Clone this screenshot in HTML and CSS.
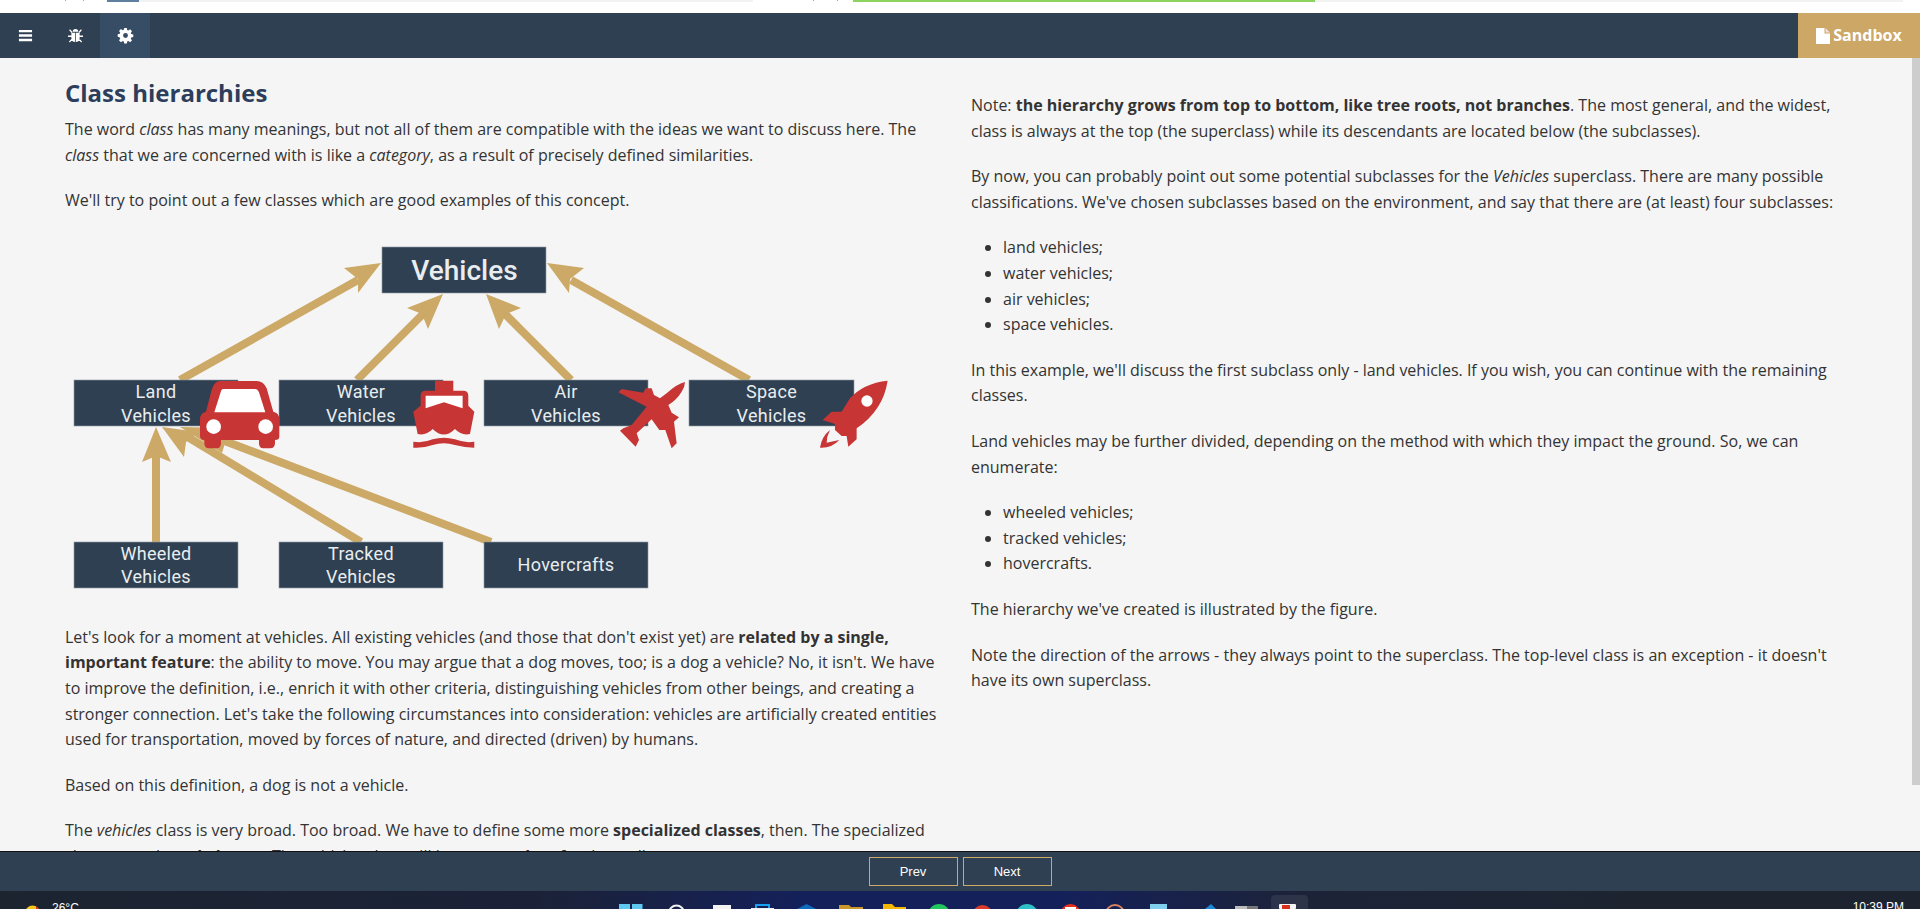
FILE: index.html
```html
<!DOCTYPE html>
<html lang="en">
<head>
  <meta charset="UTF-8">
  <title>Class hierarchies</title>
  <link rel="stylesheet" href="styles.css">
</head>
<body>
  <!-- top progress strip -->
  <div class="top-strip">
    <span class="gap-start"><i class="tick tick-a"></i><i class="tick tick-b"></i></span>
    <span class="seg-blue"></span>
    <span class="seg-light-a"></span>
    <span class="gap-mid"><i class="tick tick-c"></i><i class="tick tick-d"></i></span>
    <span class="seg-green"></span>
    <span class="seg-light-b"></span>
  </div>

  <div class="navbar">
    <a class="nav-btn">
      <svg class="nav-icon" viewBox="0 0 16 16"><path fill="#fff" d="M1 2h14v2.600H1zM1 6.700h14v2.600H1zM1 11.400h14V14H1z"/></svg>
    </a>
    <a class="nav-btn">
      <svg class="nav-icon" viewBox="0 0 16 16"><path fill="#fff" d="M5 4a3 3 0 0 1 6 0zM3.600 5h4v10c-2.400-.2-4-1.800-4-4.400zM8.400 5h4v5.600c0 2.600-1.600 4.200-4 4.400zM1.200 2.400l1-1 2.600 2.800-1 1zM14.800 2.400l-1-1-2.600 2.800 1 1zM0 8h3.600v1.500H0zM12.400 8H16v1.500h-3.600zM1 14.400l2.600-2.800 1 1L2 15.400zM15 14.400l-2.600-2.800-1 1 2.600 2.800z"/></svg>
    </a>
    <a class="nav-btn active">
      <svg class="nav-icon" viewBox="0 0 16 16"><path fill="#fff" fill-rule="evenodd" d="M6.600 0h2.800l.4 2.200 1.200.5 1.900-1.300 2 2-1.300 1.900.5 1.200 2.200.4v2.800l-2.200.4-.5 1.200 1.300 1.900-2 2-1.900-1.300-1.200.5-.4 2.200H6.600l-.4-2.200-1.200-.5-1.900 1.300-2-2 1.300-1.900-.5-1.200L-.3 9.400V6.600l2.200-.4.5-1.200-1.300-1.900 2-2 1.900 1.300 1.200-.5zM8 5.400a2.600 2.600 0 1 0 0 5.200 2.600 2.600 0 0 0 0-5.200z"/></svg>
    </a>
    <a class="sandbox">
      <svg class="file-icon" viewBox="0 0 14 16"><path fill="#fff" d="M0 0h8.500v5.500H14V16H0z"/><path fill="#f3dfe0" d="M9.500 0L14 4.500H9.500z"/></svg>
      Sandbox
    </a>
  </div>

  <div class="content">
    <div class="col col-left">
      <h2>Class hierarchies</h2>
      <p>The word <em>class</em> has many meanings, but not all of them are compatible with the ideas we want to discuss here. The <em>class</em> that we are concerned with is like a <em>category</em>, as a result of precisely defined similarities.</p>
      <p>We'll try to point out a few classes which are good examples of this concept.</p>

      <!-- figure: vehicles hierarchy, viewBox is in page pixels -->
      <svg class="figure" viewBox="65 234 842 371">
        <g class="shaft">
          <path d="M180 380L358 280"/>
          <path d="M357 380L424 313"/>
          <path d="M571 380L504 313"/>
          <path d="M749 380L571 280"/>
          <path d="M156 542V455"/>
          <path d="M361 542L186 436"/>
          <path d="M491 542L222 440"/>
        </g>
        <g class="head">
          <path d="M381 263L344 268L358 279L358 293z"/>
          <path d="M443 294L407 308L422 314L428 329z"/>
          <path d="M486 294L521 308L506 314L499 329z"/>
          <path d="M547 263L584 268L570 279L569 293z"/>
          <path d="M156 427L142 462L156 456L171 462z"/>
          <path d="M162 427L198 432L186 442L184 457z"/>
          <path d="M180 427L232 428L226 440L222 453z"/>
        </g>

        <g class="box"><rect x="382" y="247" width="164" height="46"/><text class="big" x="464.500" y="280">Vehicles</text></g>

        <g class="box"><rect x="74" y="380" width="164" height="46"/><text x="156" y="398">Land</text><text x="156" y="422">Vehicles</text></g>
        <g class="box"><rect x="279" y="380" width="164" height="46"/><text x="361" y="398">Water</text><text x="361" y="422">Vehicles</text></g>
        <g class="box"><rect x="484" y="380" width="164" height="46"/><text x="566" y="398">Air</text><text x="566" y="422">Vehicles</text></g>
        <g class="box"><rect x="689" y="380" width="165" height="46"/><text x="771.500" y="398">Space</text><text x="771.500" y="422">Vehicles</text></g>

        <g class="box"><rect x="74" y="542" width="164" height="46"/><text x="156" y="560">Wheeled</text><text x="156" y="583">Vehicles</text></g>
        <g class="box"><rect x="279" y="542" width="164" height="46"/><text x="361" y="560">Tracked</text><text x="361" y="583">Vehicles</text></g>
        <g class="box"><rect x="484" y="542" width="164" height="46"/><text x="566" y="571">Hovercrafts</text></g>

        <!-- car and ship -->
        <g class="red" transform="translate(60 230) scale(.3333)">
          <path d="M480 453H590Q610 453 620 475L640 545Q658 548 658 570V620Q658 630 645 630V640Q645 655 630 655H610Q597 655 597 640V630H483V640Q483 655 470 655H447Q433 655 433 640V630Q420 630 420 618V570Q420 548 438 545L455 480Q463 453 480 453Z"/>
          <path class="white" d="M490 477H585Q593 477 597 487L616 547H463L482 487Q484 477 490 477Z"/>
          <circle class="white" cx="461" cy="590" r="22"/>
          <circle class="white" cx="617" cy="590" r="22"/>
          <path d="M1125 452H1180V482H1210Q1225 482 1225 497V527L1243 545L1230 612Q1205 618 1185 597Q1152 630 1118 597Q1098 618 1073 612L1060 545L1082 527V497Q1082 482 1097 482H1125Z"/>
          <path class="white" d="M1097 497H1208V535L1152 517L1097 535Z"/>
          <path d="M1060 635Q1090 640 1118 628Q1152 618 1185 628Q1215 640 1243 635V653Q1215 653 1185 645Q1152 635 1118 645Q1090 655 1060 653Z"/>
        </g>
        <!-- plane and rocket -->
        <g class="red" transform="translate(480 230) scale(.3333)">
          <path d="M615 456Q590 462 560 490L540 505L522 495L515 475L497 475L490 488L425 477L415 487L500 530L455 585L430 595L420 602L467 650L477 630L470 610L515 568L538 600L556 600L575 655L590 640L582 575L597 562L575 548L565 525Q590 510 605 485Q615 470 615 456Z"/>
          <path d="M1223 452Q1150 460 1110 505L1085 545L1055 545L1028 570L1065 582L1065 600L1085 618L1100 618L1105 650L1130 628L1130 595Q1210 540 1223 452Z"/>
          <circle class="white" cx="1161" cy="513" r="17"/>
          <path d="M1050 600Q1025 620 1020 653Q1055 655 1078 630Q1055 635 1040 638Q1040 620 1050 600Z"/>
        </g>
      </svg>

      <p>Let's look for a moment at vehicles. All existing vehicles (and those that don't exist yet) are <strong>related by a single, important feature</strong>: the ability to move. You may argue that a dog moves, too; is a dog a vehicle? No, it isn't. We have to improve the definition, i.e., enrich it with other criteria, distinguishing vehicles from other beings, and creating a stronger connection. Let's take the following circumstances into consideration: vehicles are artificially created entities used for transportation, moved by forces of nature, and directed (driven) by humans.</p>
      <p>Based on this definition, a dog is not a vehicle.</p>
      <p>The <em>vehicles</em> class is very broad. Too broad. We have to define some more <strong>specialized classes</strong>, then. The specialized classes are the <strong>subclasses</strong>. The vehicles class will be a <strong>superclass</strong> for them all.</p>
    </div>

    <div class="col col-right">
      <p>Note: <strong>the hierarchy grows from top to bottom, like tree roots, not branches</strong>. The most general, and the widest, class is always at the top (the superclass) while its descendants are located below (the subclasses).</p>
      <p>By now, you can probably point out some potential subclasses for the <em>Vehicles</em> superclass. There are many possible classifications. We've chosen subclasses based on the environment, and say that there are (at least) four subclasses:</p>
      <ul>
        <li>land vehicles;</li>
        <li>water vehicles;</li>
        <li>air vehicles;</li>
        <li>space vehicles.</li>
      </ul>
      <p>In this example, we'll discuss the first subclass only - land vehicles. If you wish, you can continue with the remaining classes.</p>
      <p>Land vehicles may be further divided, depending on the method with which they impact the ground. So, we can enumerate:</p>
      <ul>
        <li>wheeled vehicles;</li>
        <li>tracked vehicles;</li>
        <li>hovercrafts.</li>
      </ul>
      <p>The hierarchy we've created is illustrated by the figure.</p>
      <p>Note the direction of the arrows - they always point to the superclass. The top-level class is an exception - it doesn't have its own superclass.</p>
    </div>
    <div class="scrollbar"></div>
  </div>

  <div class="footer">
    <a class="page-btn">Prev</a>
    <a class="page-btn">Next</a>
  </div>

  <!-- desktop taskbar, cut off by the bottom of the window -->
  <div class="taskbar">
    <div class="tray-left">
      <svg class="weather" viewBox="0 0 15 18"><circle cx="7.500" cy="22" r="7.500" fill="#f5c518"/><path d="M11 15.500a7.500 7.500 0 0 1 4 6.500h-4z" fill="#d8342a"/></svg>
      <span class="temp">26°C</span>
    </div>
    <svg class="tray-icons" viewBox="0 0 720 18">
      <path fill="#5fc8f0" d="M19 13h11v5H19zM32 13h10.500v5H32z"/>
      <circle cx="76.500" cy="22" r="7.500" fill="none" stroke="#f0f0f0" stroke-width="2"/>
      <rect x="113" y="14" width="18" height="4" fill="#f2f2f2"/>
      <path fill="none" stroke="#19a0f0" stroke-width="2" d="M156 18v-4h13v4"/>
      <rect x="151" y="17" width="23" height="1" fill="#f0f0f0"/>
      <path fill="#0f6cbd" d="M206.500 13l9.500 5h-19z"/>
      <path fill="#c9962a" d="M239 14h10l2 2h12v2h-24z"/>
      <path fill="#f5b800" d="M283 13h9l3 3h11v2h-23z"/>
      <circle cx="339" cy="24" r="11" fill="#22c55e"/>
      <circle cx="382.500" cy="24" r="10" fill="#d93a2b"/>
      <circle cx="427" cy="24" r="11" fill="#2fbfc6"/>
      <circle cx="470.500" cy="23" r="10" fill="#e8321e"/>
      <rect x="465" y="16" width="11" height="2" fill="#fff"/>
      <circle cx="515" cy="23" r="9" fill="none" stroke="#d9835f" stroke-width="2"/>
      <rect x="550" y="13" width="17" height="5" fill="#7fd0ee"/>
      <path fill="#1e88d8" d="M611 13l5 5h-11z"/>
      <rect x="635" y="15" width="12" height="3" fill="#bdbdbd"/>
      <rect x="647" y="15" width="11" height="3" fill="#777"/>
      <rect x="671" y="4" width="37" height="16" rx="4" fill="#fff" fill-opacity=".08"/>
      <rect x="679" y="13" width="17" height="5" rx="1" fill="#f5f5f5"/>
      <rect x="682" y="14" width="8" height="4" fill="#d9301e"/>
    </svg>
    <span class="clock">10:39 PM</span>
  </div>
</body>
</html>
```

FILE: styles.css
```css
* {
  box-sizing: border-box;
}
html, body {
  height: 100%;
}
body {
  margin: 0;
  display: flex;
  flex-direction: column;
  overflow: hidden;
  font-family: "Open Sans", sans-serif;
  font-size: 16px;
  line-height: 25.6px;
  color: #333;
  background: #f5f5f5;
}

/* top strip */
.top-strip {
  height: 13px;
  flex: none;
  display: flex;
  align-items: flex-start;
  background: #fff;
}
.top-strip span {
  display: block;
  height: 2px;
}
.gap-start {
  width: 107px;
  position: relative;
}
.seg-blue {
  width: 32px;
  background: #5f7f9f;
}
.seg-light-a {
  width: 614px;
  background: #f2f2f2;
}
.gap-mid {
  width: 100px;
  position: relative;
}
.seg-green {
  width: 462px;
  background: #8dd35f;
}
.seg-light-b {
  width: 588px;
  background: #f2f2f2;
}
.tick {
  position: absolute;
  top: 0;
  width: 1px;
  height: 1px;
  background: #9aa7c7;
}
.tick-a {
  left: 65px;
}
.tick-b {
  left: 83px;
}
.tick-c {
  left: 60px;
}
.tick-d {
  left: 84px;
}

/* navbar */
.navbar {
  height: 45px;
  flex: none;
  display: flex;
  background: #2f4052;
}
.nav-btn {
  width: 50px;
  display: flex;
  align-items: center;
  justify-content: center;
}
.nav-btn.active {
  background: #364d65;
}
.nav-icon {
  width: 15px;
  height: 15px;
  overflow: visible;
}
.sandbox {
  margin-left: auto;
  width: 122px;
  display: flex;
  align-items: center;
  justify-content: center;
  gap: 3px;
  background: #cca766;
  color: #fff;
  font-weight: 700;
  font-size: 16px;
}
.file-icon {
  width: 14px;
  height: 16px;
}

/* content */
.content {
  flex: 1;
  min-height: 0;
  overflow: hidden;
  position: relative;
  display: flex;
  padding: 0 73px 0 65px;
  gap: 30px;
  border-bottom: 1px solid #111;
}
.col {
  flex: 1;
  min-width: 0;
}
.col-left {
  padding-top: 22px;
}
.col-right {
  padding-top: 35px;
}
h2 {
  margin: 0 0 11px;
  font-size: 24px;
  line-height: 26px;
  font-weight: 700;
  color: #2c3e5c;
}
p {
  margin: 0 0 20px;
}
ul {
  margin: 0 0 20px;
  padding-left: 32px;
}
.scrollbar {
  position: absolute;
  top: 0;
  right: 0;
  width: 8px;
  height: 727px;
  background: #cdcdcd;
}

/* figure */
.figure {
  display: block;
  width: 842px;
  height: 371px;
  margin: 0 0 20px;
}
.shaft path {
  fill: none;
  stroke: #cca966;
  stroke-width: 8;
}
.head path {
  fill: #cca966;
}
.box rect {
  fill: #2f4052;
  stroke: #8c99a6;
  stroke-width: .6;
}
.box text {
  fill: #e9edef;
  font-family: "Roboto", sans-serif;
  font-size: 18px;
  text-anchor: middle;
  letter-spacing: 0.3px;
}
.box .big {
  font-size: 28px;
  font-weight: 500;
  letter-spacing: 0;
}
.red {
  fill: #c73535;
}
.red .white {
  fill: #fff;
}

/* footer */
.footer {
  height: 39px;
  flex: none;
  display: flex;
  justify-content: center;
  align-items: center;
  gap: 5px;
  background: #2f4052;
}
.page-btn {
  width: 89px;
  height: 29px;
  display: flex;
  align-items: center;
  justify-content: center;
  border: 1px solid #cca966;
  color: #fff;
  font-family: "Liberation Sans", sans-serif;
  font-size: 13px;
}

/* taskbar */
.taskbar {
  height: 18px;
  flex: none;
  display: flex;
  overflow: hidden;
  background: linear-gradient(90deg, #1c2430 0, #1b2238 28%, #14205a 42%, #14205a 55%, #1c2338 68%, #1d2430 85%);
  color: #fff;
  font-family: "Liberation Sans", sans-serif;
  font-size: 12px;
  line-height: 14px;
}
.tray-left {
  width: 600px;
  flex: none;
  display: flex;
  padding-left: 25px;
}
.weather {
  width: 15px;
  height: 18px;
  flex: none;
}
.temp {
  margin: 10px 0 0 12px;
}
.tray-icons {
  width: 720px;
  height: 18px;
  flex: none;
}
.clock {
  margin: 9px 16px 0 auto;
}
```
